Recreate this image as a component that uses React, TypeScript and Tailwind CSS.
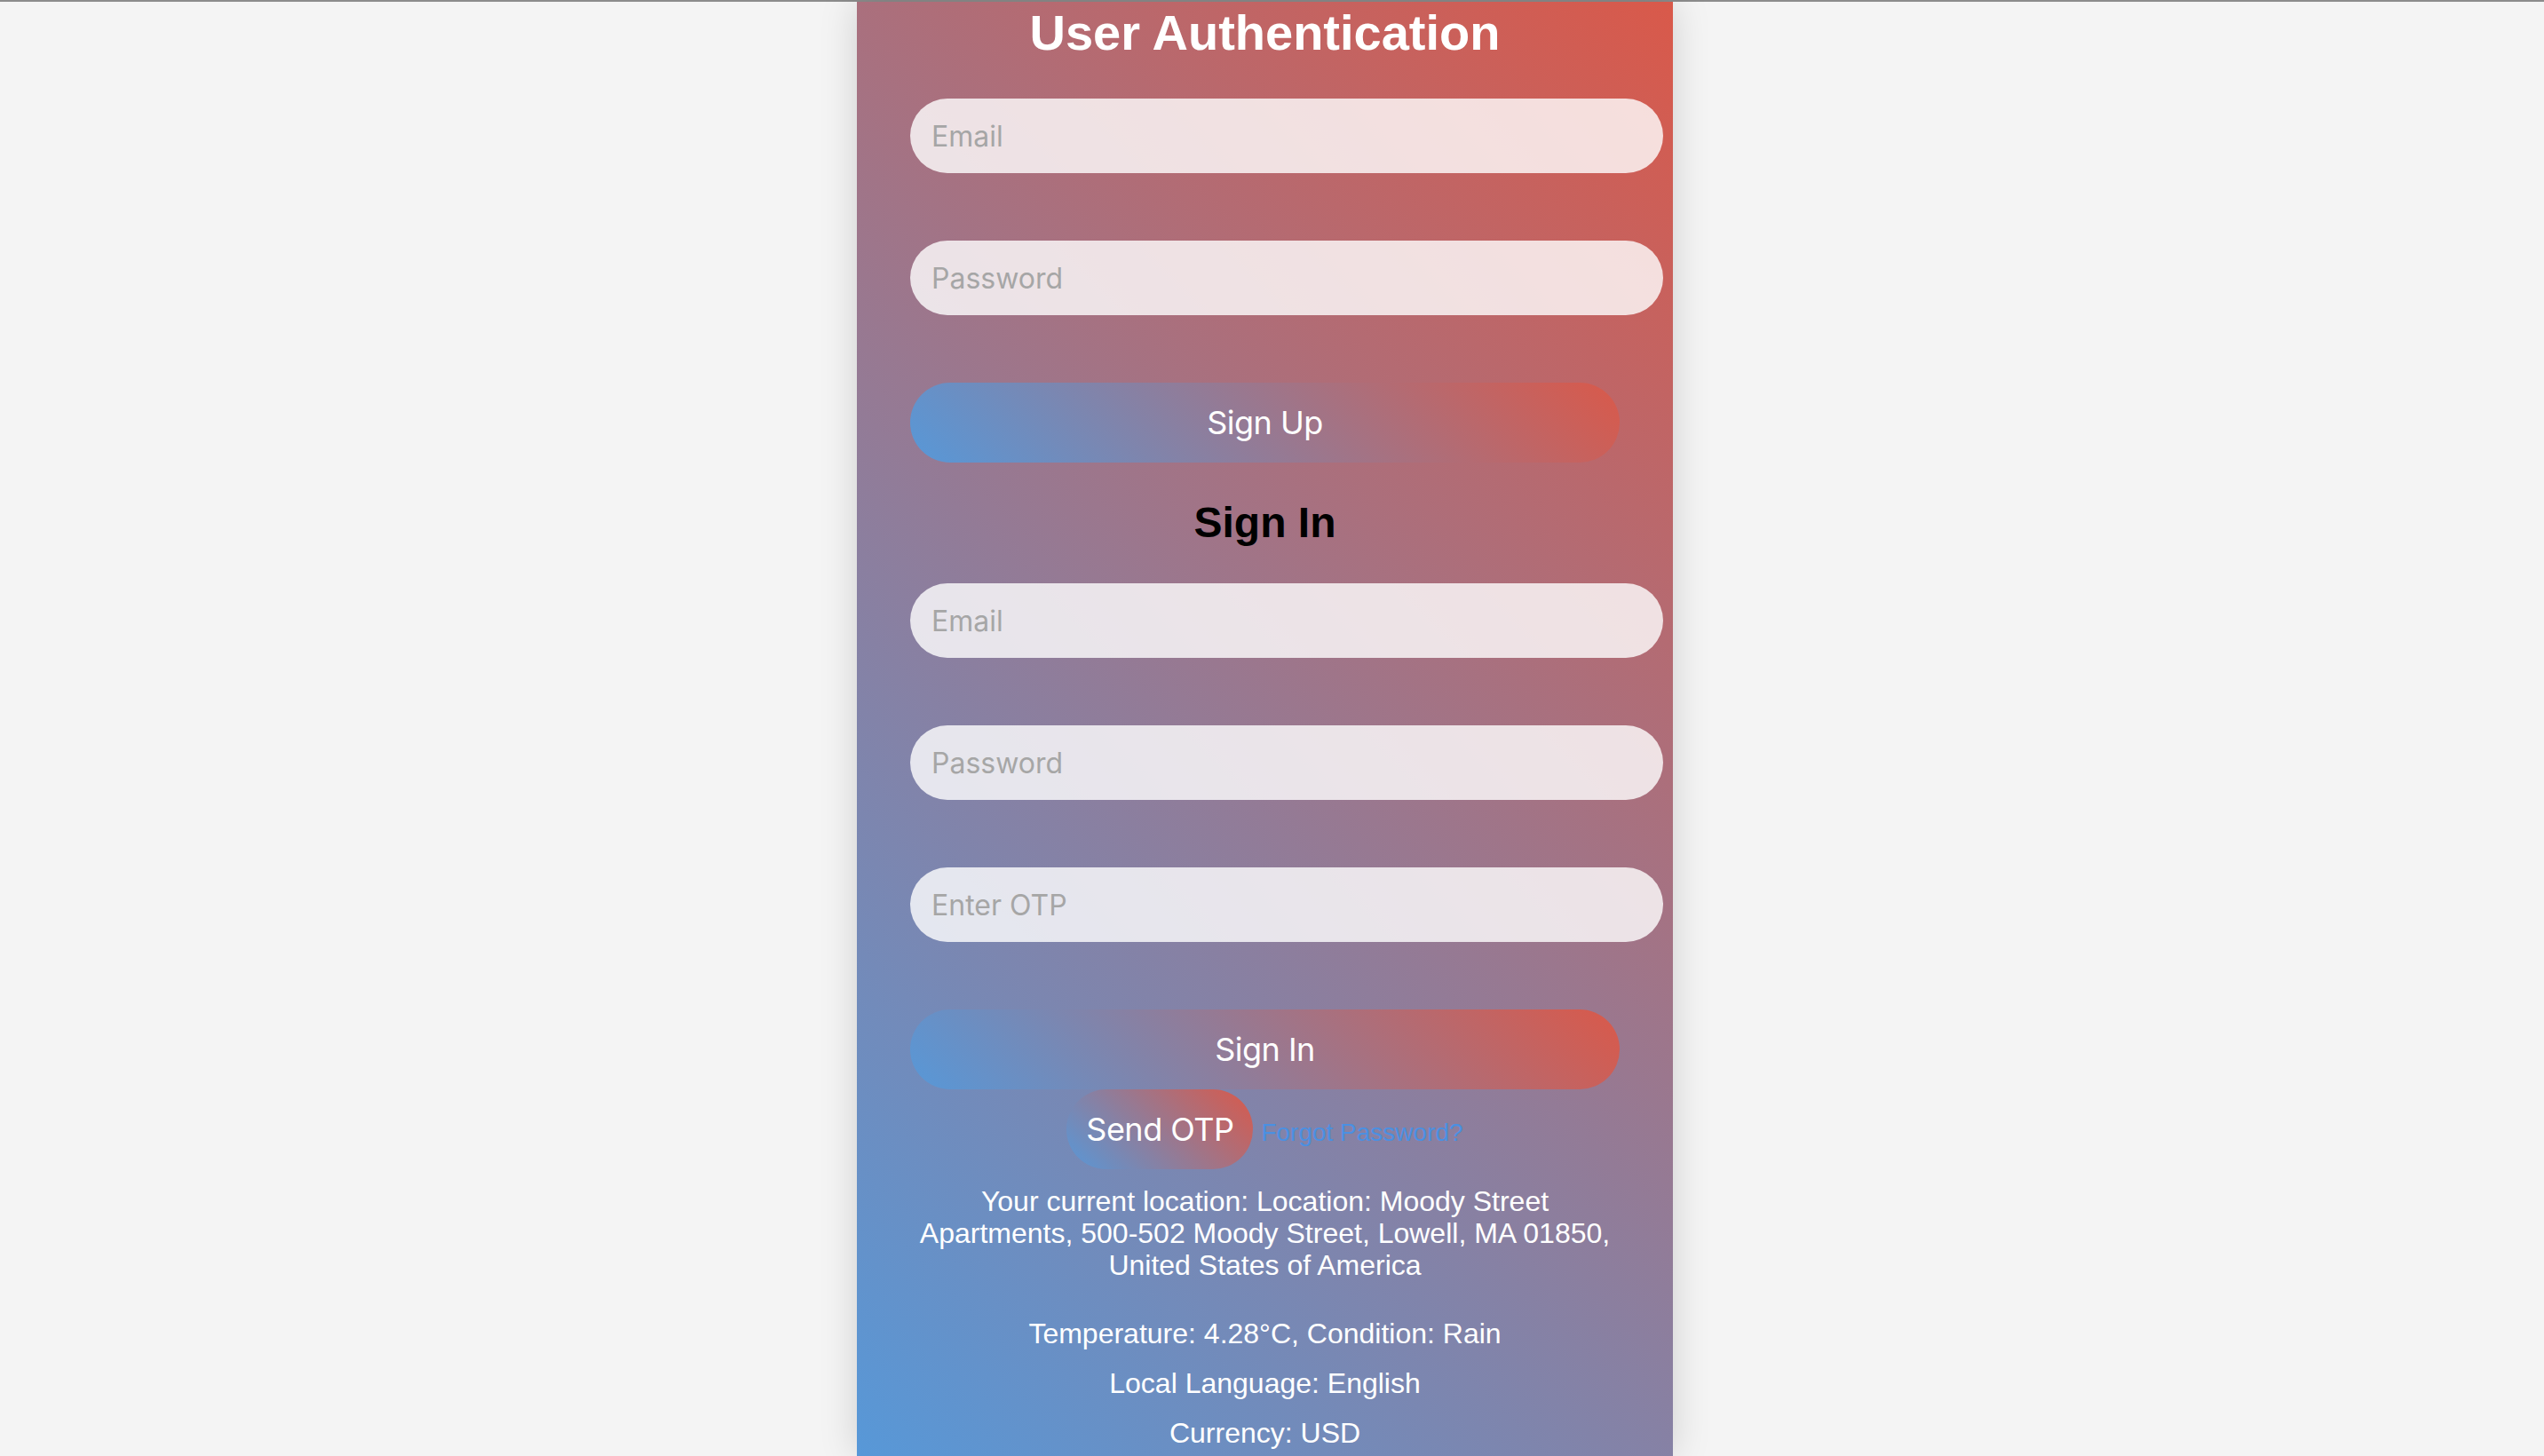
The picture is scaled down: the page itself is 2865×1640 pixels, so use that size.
import React from "react";

const inputCls =
  "block w-[848px] h-[84px] rounded-full bg-white/80 pl-[24px] pr-[24px] text-[32px] text-[#222] outline-none placeholder:text-[#a6a6a6] font-['Inter',sans-serif]";

const btnCls =
  "block w-full h-[90px] rounded-full bg-[linear-gradient(45deg,#5798d8,#d9594a)] text-white text-[36px] tracking-[-0.5px] font-['Inter',sans-serif] text-center";

const info = {
  location:
    "Your current location: Location: Moody Street Apartments, 500-502 Moody Street, Lowell, MA 01850, United States of America",
  temperature: "Temperature: 4.28°C, Condition: Rain",
  language: "Local Language: English",
  currency: "Currency: USD",
};

export default function App() {
  return (
    <div className="min-h-screen bg-[#f4f4f4] border-t-2 border-[#8c8c8c] font-['Liberation_Sans',Arial,sans-serif]">
      <div className="flex justify-center pr-[16px]">
        <div className="w-[919px] h-[1638px] px-[60px] bg-[linear-gradient(45deg,#5798d8,#d9594a)] shadow-[0_0_40px_rgba(0,0,0,0.15)]">
          <h1 className="mt-[3px] h-[64px] leading-[64px] text-[56px] font-bold text-white text-center">
            User Authentication
          </h1>

          <input className={`${inputCls} mt-[42px]`} type="email" placeholder="Email" />
          <input className={`${inputCls} mt-[76px]`} type="password" placeholder="Password" />
          <button className={`${btnCls} mt-[76px]`}>Sign Up</button>

          <h2 className="mt-[40px] h-[55px] leading-[55px] text-[48px] font-bold text-black text-center">
            Sign In
          </h2>

          <input className={`${inputCls} mt-[41px]`} type="email" placeholder="Email" />
          <input className={`${inputCls} mt-[76px]`} type="password" placeholder="Password" />
          <input className={`${inputCls} mt-[76px]`} type="text" placeholder="Enter OTP" />
          <button className={`${btnCls} mt-[76px]`}>Sign In</button>

          <div className="flex justify-center items-baseline gap-[9px]">
            <button className="w-[210px] h-[90px] rounded-full bg-[linear-gradient(45deg,#5798d8,#d9594a)] text-white text-[36px] tracking-[-0.5px] font-['Inter',sans-serif]">
              Send OTP
            </button>
            <a href="#" className="text-[28px] text-[#4a90e2]">
              Forgot Password?
            </a>
          </div>

          <p className="mt-[18px] text-[32px] leading-[36px] text-white text-center">{info.location}</p>
          <p className="mt-[41px] text-[32px] leading-[36px] text-white text-center">{info.temperature}</p>
          <p className="mt-[20px] text-[32px] leading-[36px] text-white text-center">{info.language}</p>
          <p className="mt-[20px] text-[32px] leading-[36px] text-white text-center">{info.currency}</p>
        </div>
      </div>
    </div>
  );
}
